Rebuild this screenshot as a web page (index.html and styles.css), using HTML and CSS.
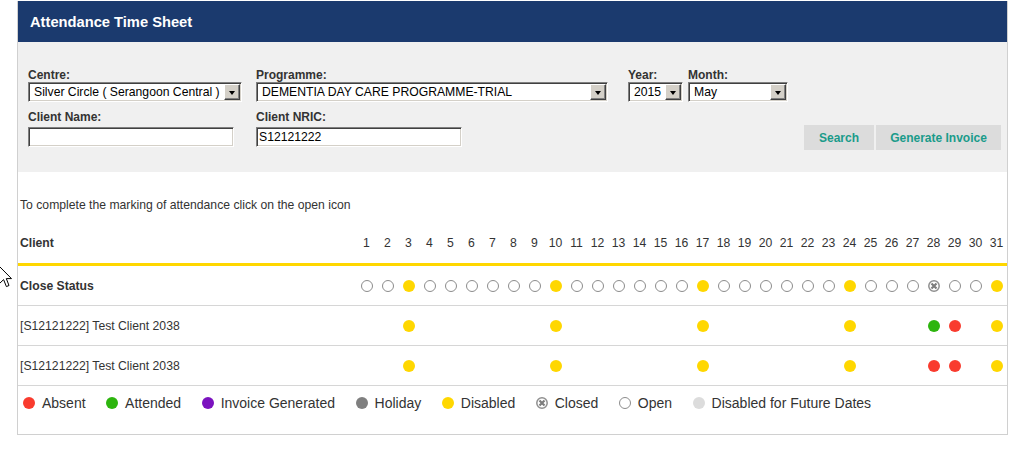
FILE: index.html
```html
<!DOCTYPE html>
<html>
<head>
<meta charset="utf-8">
<link rel="stylesheet" href="styles.css">
</head>
<body>
<svg class="cursor" width="13" height="22" viewBox="0 0 13 22"><path d="M0.5 0.5 V17.5 L4.6 13.6 L7.4 20.6 L10 19.5 L7.3 12.6 H12.5 Z" fill="#fff" stroke="#000" stroke-width="1"/></svg>
<div class="sheet">
  <div class="title-bar">Attendance Time Sheet</div>
  <div class="filters">
    <div class="filter-row">
      <div class="field f-centre"><label>Centre:</label><div class="select"><span>Silver Circle ( Serangoon Central )</span><i class="drop"></i></div></div>
      <div class="field f-prog"><label>Programme:</label><div class="select"><span>DEMENTIA DAY CARE PROGRAMME-TRIAL</span><i class="drop"></i></div></div>
      <div class="field f-year"><label>Year:</label><div class="select"><span>2015</span><i class="drop"></i></div></div>
      <div class="field f-month"><label>Month:</label><div class="select"><span>May</span><i class="drop"></i></div></div>
    </div>
    <div class="filter-row row2">
      <div class="field f-name"><label>Client Name:</label><div class="input"></div></div>
      <div class="field f-nric"><label>Client NRIC:</label><div class="input">S12121222</div></div>
      <div class="actions"><button class="btn btn-search">Search</button><button class="btn btn-invoice">Generate Invoice</button></div>
    </div>
  </div>
  <p class="hint">To complete the marking of attendance click on the open icon</p>
  <div class="trow thead">
    <div class="tname">Client</div>
    <span>1</span><span>2</span><span>3</span><span>4</span><span>5</span><span>6</span><span>7</span><span>8</span><span>9</span><span>10</span><span>11</span><span>12</span><span>13</span><span>14</span><span>15</span><span>16</span><span>17</span><span>18</span><span>19</span><span>20</span><span>21</span><span>22</span><span>23</span><span>24</span><span>25</span><span>26</span><span>27</span><span>28</span><span>29</span><span>30</span><span>31</span>
  </div>
  <div class="trow status">
    <div class="tname">Close Status</div>
    <i class="dot o"></i><i class="dot o"></i><i class="dot y"></i><i class="dot o"></i><i class="dot o"></i><i class="dot o"></i><i class="dot o"></i><i class="dot o"></i><i class="dot o"></i><i class="dot y"></i><i class="dot o"></i><i class="dot o"></i><i class="dot o"></i><i class="dot o"></i><i class="dot o"></i><i class="dot o"></i><i class="dot y"></i><i class="dot o"></i><i class="dot o"></i><i class="dot o"></i><i class="dot o"></i><i class="dot o"></i><i class="dot o"></i><i class="dot y"></i><i class="dot o"></i><i class="dot o"></i><i class="dot o"></i>
    <svg class="closed" width="12" height="12" viewBox="0 0 12 12"><circle cx="6" cy="6" r="5.2" fill="#fff" stroke="#8f8f8f" stroke-width="1.5"/><path d="M3.5 3.5 L8.5 8.5 M8.5 3.5 L3.5 8.5" stroke="#7d7d7d" stroke-width="2.2"/></svg>
    <i class="dot o"></i><i class="dot o"></i><i class="dot y"></i>
  </div>
  <div class="trow">
    <div class="tname">[S12121222] Test Client 2038</div>
    <i></i><i></i><i class="dot y"></i><i></i><i></i><i></i><i></i><i></i><i></i><i class="dot y"></i><i></i><i></i><i></i><i></i><i></i><i></i><i class="dot y"></i><i></i><i></i><i></i><i></i><i></i><i></i><i class="dot y"></i><i></i><i></i><i></i><i class="dot g"></i><i class="dot r"></i><i></i><i class="dot y"></i>
  </div>
  <div class="trow">
    <div class="tname">[S12121222] Test Client 2038</div>
    <i></i><i></i><i class="dot y"></i><i></i><i></i><i></i><i></i><i></i><i></i><i class="dot y"></i><i></i><i></i><i></i><i></i><i></i><i></i><i class="dot y"></i><i></i><i></i><i></i><i></i><i></i><i></i><i class="dot y"></i><i></i><i></i><i></i><i class="dot r"></i><i class="dot r"></i><i></i><i class="dot y"></i>
  </div>
  <div class="legend">
    <div class="item"><i class="dot r"></i>Absent</div>
    <div class="item"><i class="dot g"></i>Attended</div>
    <div class="item"><i class="dot p"></i>Invoice Generated</div>
    <div class="item"><i class="dot h"></i>Holiday</div>
    <div class="item"><i class="dot y"></i>Disabled</div>
    <div class="item"><svg class="closed" width="12" height="12" viewBox="0 0 12 12"><circle cx="6" cy="6" r="5.2" fill="#fff" stroke="#8f8f8f" stroke-width="1.5"/><path d="M3.5 3.5 L8.5 8.5 M8.5 3.5 L3.5 8.5" stroke="#7d7d7d" stroke-width="2.2"/></svg>Closed</div>
    <div class="item"><i class="dot o"></i>Open</div>
    <div class="item"><i class="dot f"></i>Disabled for Future Dates</div>
  </div>
</div>
</body>
</html>
```
FILE: styles.css
```css
body {
  margin: 0;
  background: #fff;
  font-family: "Liberation Sans", Arial, sans-serif;
  color: #333;
}
.cursor {
  position: absolute;
  left: -1px;
  top: 266px;
}
.sheet {
  margin: 1px 0 0 17px;
  width: 989px;
  border: 1px solid #d0d0d0;
  border-top: 0;
}
.title-bar {
  height: 41px;
  background: #1b3a6e;
  color: #fff;
  font-weight: bold;
  font-size: 14.7px;
  display: flex;
  align-items: center;
  padding-left: 12px;
}
.filters {
  background: #f0f0f0;
  padding: 26px 6px 22px 10px;
}
.filter-row {
  display: flex;
  align-items: flex-start;
}
.row2 {
  margin-top: 8px;
}
.field {
  display: flex;
  flex-direction: column;
}
.field label {
  font-size: 12px;
  line-height: 14px;
  font-weight: bold;
  color: #333;
}
.f-centre { width: 214px; margin-right: 14px; }
.f-prog { width: 352px; margin-right: 20px; }
.f-year { width: 55px; margin-right: 5px; }
.f-month { width: 100px; }
.f-name { width: 206px; margin-right: 22px; }
.f-nric { width: 206px; }
.select, .input {
  box-sizing: border-box;
  height: 20px;
  background: #fff;
  border: 1px solid;
  border-color: #808080 #fff #fff #808080;
  box-shadow: inset 1px 1px 0 #404040, inset -1px -1px 0 #d4d0c8;
  font-size: 12.2px;
  color: #000;
  display: flex;
  align-items: center;
}
.select span {
  flex: 1;
  padding-left: 5px;
  white-space: nowrap;
  overflow: hidden;
}
.input {
  margin-top: 3px;
  padding-left: 2px;
}
.drop {
  box-sizing: border-box;
  width: 16px;
  height: 16px;
  margin-right: 1px;
  background: #d4d0c8;
  border: 1px solid;
  border-color: #fff #404040 #404040 #fff;
  box-shadow: inset -1px -1px 0 #808080;
  display: flex;
  align-items: center;
  justify-content: center;
}
.drop::after {
  content: "";
  width: 0;
  height: 0;
  border-left: 3.5px solid transparent;
  border-right: 3.5px solid transparent;
  border-top: 4px solid #000;
  margin-top: 1px;
}
.actions {
  margin-left: auto;
  margin-top: 15px;
  display: flex;
  gap: 2px;
}
.btn {
  height: 25px;
  border: 0;
  background: #dcdcdc;
  color: #1a9b8a;
  font-family: "Liberation Sans", Arial, sans-serif;
  font-weight: bold;
  font-size: 12px;
  padding: 0;
}
.btn-search { width: 70px; }
.btn-invoice { width: 125px; }
.hint {
  margin: 0;
  padding: 26px 0 11px 2px;
  font-size: 12.2px;
  line-height: 14px;
}
.trow {
  display: grid;
  grid-template-columns: 338px repeat(31, 21px);
  align-items: center;
  justify-items: center;
  height: 39px;
  border-bottom: 1px solid #d6d6d6;
  font-size: 12.2px;
}
.trow .tname {
  justify-self: start;
  padding-left: 2px;
}
.thead {
  height: 40px;
  border-bottom: 3px solid #ffd700;
}
.thead .tname, .status .tname {
  font-weight: bold;
}
.dot {
  display: block;
  box-sizing: border-box;
  width: 12px;
  height: 12px;
  border-radius: 50%;
}
.dot.o { background: #fff; border: 1px solid #8c8c8c; }
.dot.y { background: #ffd700; }
.dot.r { background: #f93b2e; }
.dot.g { background: #2db50e; }
.dot.p { background: #7b12bf; }
.dot.h { background: #7f7f7f; }
.dot.f { background: #dcdcdc; }
.closed { display: block; }
.legend {
  display: flex;
  align-items: center;
  gap: 20.5px;
  padding: 8px 0 22px 5px;
  font-size: 14px;
  line-height: 18px;
  color: #333;
}
.legend .item {
  display: flex;
  align-items: center;
  gap: 7px;
}
```
